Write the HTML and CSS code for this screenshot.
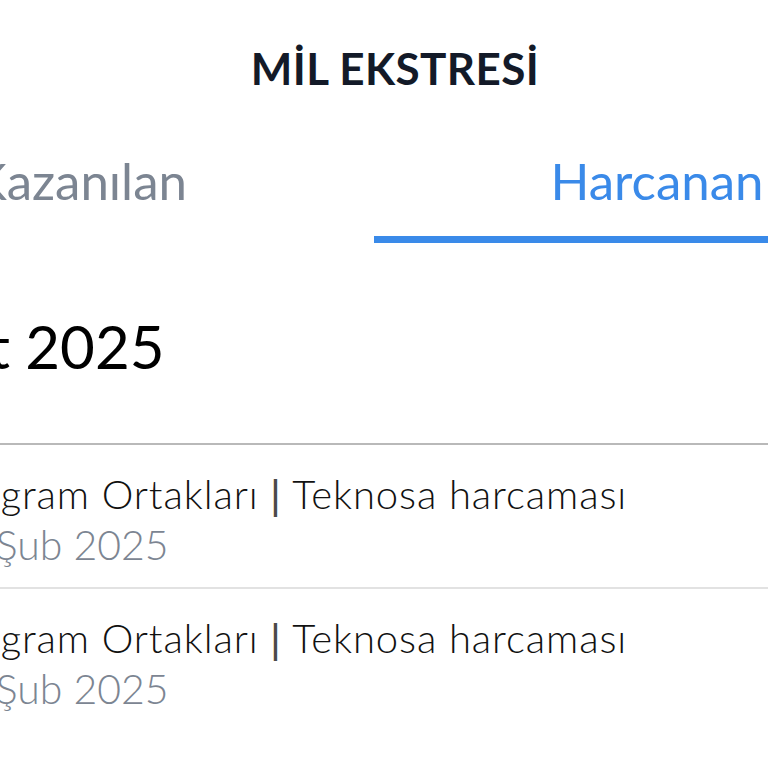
FILE: index.html
```html
<!DOCTYPE html>
<html lang="tr">
<head>
    <meta charset="UTF-8">
    <meta name="viewport" content="width=device-width, initial-scale=1.0">
    <title>Mil Ekstresi</title>
    <link rel="stylesheet" href="styles.css">
</head>
<body>
    <div class="screen">
        <header class="topbar">
            <h1>MİL EKSTRESİ</h1>
        </header>

        <nav class="tabs">
            <div class="tab">Kazanılan</div>
            <div class="tab active">Harcanan</div>
        </nav>

        <section class="month">
            <h2 class="month-title">Şubat 2025</h2>

            <ul class="tx-list">
                <li class="tx-item">
                    <div class="tx-title">Program Ortakları <span class="sep">|</span> Teknosa harcaması</div>
                    <div class="tx-date">14 Şub 2025</div>
                </li>
                <li class="tx-item">
                    <div class="tx-title">Program Ortakları <span class="sep">|</span> Teknosa harcaması</div>
                    <div class="tx-date">14 Şub 2025</div>
                </li>
            </ul>
        </section>
    </div>
</body>
</html>
```

FILE: styles.css
```css
:root {
    --text-dark: #131a28;
    --text-muted: #7c8592;
    --accent: #3a8ae9;
    --line-strong: #b9b9b9;
    --line-light: #e2e2e2;
}

* {
    margin: 0;
    padding: 0;
    box-sizing: border-box;
}

body {
    font-family: Lato, "Noto Sans", sans-serif;
    background-color: #ffffff;
    color: var(--text-dark);
    overflow: hidden;
}

.screen {
    width: 1148px;
    margin-left: -200px;
}

.topbar {
    height: 130px;
    padding-top: 38px;
    padding-left: 42px;
    text-align: center;
}

.topbar h1 {
    font-size: 44px;
    font-weight: 700;
    line-height: 60px;
    letter-spacing: 0.4px;
    color: var(--text-dark);
}

.tabs {
    display: flex;
}

.tab {
    flex: 0 0 50%;
    height: 113px;
    padding-top: 21px;
    text-align: center;
    font-size: 51px;
    line-height: 60px;
    color: var(--text-muted);
    border-bottom: 7px solid transparent;
}

.tab:first-child {
    padding-right: 14px;
}

.tab.active {
    padding-right: 8px;
    color: var(--accent);
    border-bottom-color: var(--accent);
}

.month-title {
    padding: 66px 0 0 60px;
    height: 202px;
    font-size: 60px;
    font-weight: 400;
    line-height: 74px;
    color: #000000;
    border-bottom: 2px solid var(--line-strong);
}

.tx-list {
    list-style: none;
}

.tx-item {
    height: 144px;
    padding: 25px 0 0 140px;
    border-bottom: 2px solid var(--line-light);
}

.tx-item:last-child {
    border-bottom: none;
}

.tx-title {
    font-size: 40px;
    font-weight: 300;
    line-height: 48px;
    letter-spacing: 0.9px;
    color: #111111;
}

.tx-title .sep {
    font-family: "Liberation Sans", sans-serif;
    font-weight: 400;
    font-size: 40px;
    color: #4a4a4a;
}

.tx-date {
    margin-left: -3px;
    font-size: 41px;
    font-weight: 300;
    line-height: 52px;
    color: var(--text-muted);
}
```
